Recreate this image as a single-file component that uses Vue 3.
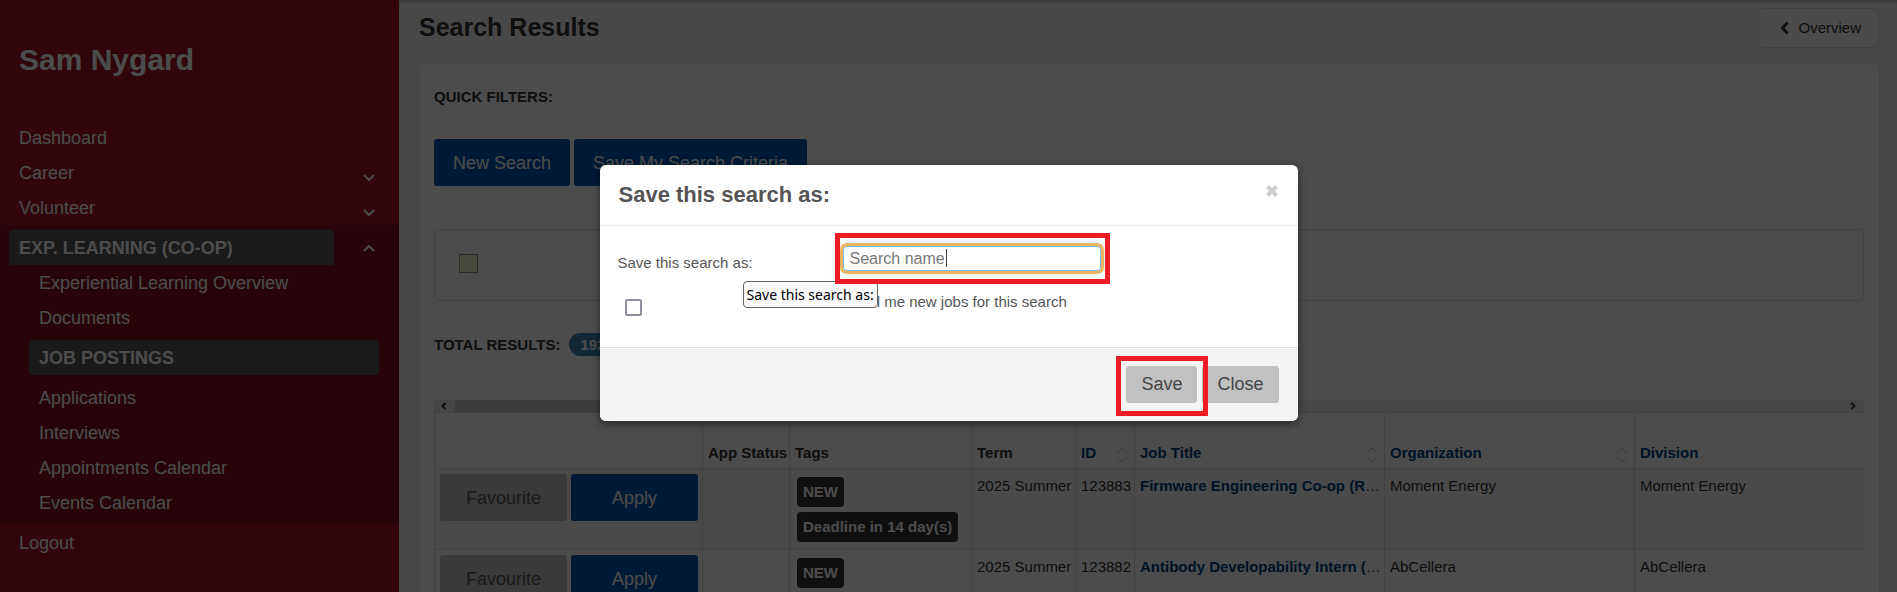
<script setup>
import { ref } from 'vue'

const topItems = [
  { label: 'Dashboard', expandable: false },
  { label: 'Career', expandable: true },
  { label: 'Volunteer', expandable: true },
]
const subItems = [
  { label: 'Experiential Learning Overview' },
  { label: 'Documents' },
  { label: 'JOB POSTINGS', active: true },
  { label: 'Applications' },
  { label: 'Interviews' },
  { label: 'Appointments Calendar' },
  { label: 'Events Calendar' },
]
const columns = [
  { key: 'actions', label: '' },
  { key: 'status', label: 'App Status' },
  { key: 'tags', label: 'Tags' },
  { key: 'term', label: 'Term' },
  { key: 'id', label: 'ID', sortable: true },
  { key: 'title', label: 'Job Title', sortable: true },
  { key: 'org', label: 'Organization', sortable: true },
  { key: 'division', label: 'Division', sortable: true },
]
const jobs = [
  { id: '123883', term: '2025 Summer', tags: ['NEW', 'Deadline in 14 day(s)'], title: 'Firmware Engineering Co-op (R', org: 'Moment Energy', division: 'Moment Energy' },
  { id: '123882', term: '2025 Summer', tags: ['NEW'], title: 'Antibody Developability Intern (', org: 'AbCellera', division: 'AbCellera' },
]
const searchName = ref('Search name')
const notify = ref(false)
</script>

<template>
  <div class="page">
    <aside class="sidebar">
      <h2 class="user">Sam Nygard</h2>
      <nav>
        <a v-for="item in topItems" :key="item.label" href="#" class="nav-row">
          <span>{{ item.label }}</span>
          <svg v-if="item.expandable" class="caret-icon low" viewBox="0 0 12 8" width="12" height="8"><path d="M1 1l5 5 5-5" /></svg>
        </a>
        <div class="group">
          <a href="#" class="group-head">
            <span class="pill head-pill">EXP. LEARNING (CO-OP)</span>
            <svg class="caret-icon" viewBox="0 0 12 8" width="12" height="8"><path d="M1 7l5-5 5 5" /></svg>
          </a>
          <a v-for="item in subItems" :key="item.label" href="#" class="sub-row" :class="{ pill: item.active, active: item.active }">{{ item.label }}</a>
        </div>
        <a href="#" class="nav-row">Logout</a>
      </nav>
    </aside>

    <main class="main">
      <header class="page-head">
        <h1>Search Results</h1>
        <a href="#" class="overview">
          <svg viewBox="0 0 9 14" width="9" height="14"><path d="M7.500 1.500L2.500 7l5 5.500" /></svg>
          Overview
        </a>
      </header>
      <section class="card">
        <h3 class="section-label">QUICK FILTERS:</h3>
        <div class="filters">
          <button type="button" class="btn primary">New Search</button>
          <button type="button" class="btn primary">Save My Search Criteria</button>
        </div>
        <div class="legend"><span class="swatch"></span></div>
        <h3 class="section-label total">TOTAL RESULTS: <span class="badge">192</span></h3>
        <div class="scrollbar">
          <svg class="arrow" viewBox="0 0 6 8" width="6" height="8"><path d="M4.500 1L1.500 4l3 3" /></svg>
          <div class="track"><div class="thumb"></div></div>
          <svg class="arrow" viewBox="0 0 6 8" width="6" height="8"><path d="M1.500 1l3 3-3 3" /></svg>
        </div>
        <div class="table-wrap">
          <table>
            <colgroup>
              <col v-for="c in columns" :key="c.key" :class="'c-' + c.key" />
            </colgroup>
            <thead>
              <tr>
                <th v-for="c in columns" :key="c.key">
                  <div v-if="c.sortable" class="th-sort">
                    <a href="#">{{ c.label }}</a>
                    <svg viewBox="0 0 12 16" width="12" height="16"><path d="M1 6l5-5 5 5M1 10l5 5 5-5" /></svg>
                  </div>
                  <template v-else>{{ c.label }}</template>
                </th>
              </tr>
            </thead>
            <tbody>
              <tr v-for="job in jobs" :key="job.id">
                <td>
                  <div class="actions">
                    <button type="button" class="btn muted">Favourite</button>
                    <button type="button" class="btn primary">Apply</button>
                  </div>
                </td>
                <td></td>
                <td>
                  <div class="tags"><span v-for="t in job.tags" :key="t" class="tag">{{ t }}</span></div>
                </td>
                <td>{{ job.term }}</td>
                <td>{{ job.id }}</td>
                <td><a href="#">{{ job.title }}</a>…</td>
                <td>{{ job.org }}</td>
                <td>{{ job.division }}</td>
              </tr>
            </tbody>
          </table>
        </div>
      </section>
    </main>

    <div class="backdrop">
      <div class="modal" role="dialog" aria-labelledby="modal-title">
        <header class="modal-head">
          <h2 id="modal-title">Save this search as:</h2>
          <button type="button" class="close" aria-label="Close dialog">
            <svg viewBox="0 0 12 12" width="12" height="12"><path d="M1.500 1.500l9 9M10.500 1.500l-9 9" /></svg>
          </button>
        </header>
        <div class="modal-body">
          <label for="search-name" class="name-label">Save this search as:</label>
          <div class="name-field">
            <div class="tooltip">Save this search as:</div>
            <input id="search-name" v-model="searchName" type="text" />
            <span class="text-caret"></span>
            <span class="mark mark-input"></span>
          </div>
          <input id="notify" v-model="notify" type="checkbox" />
          <label for="notify" class="notify-label">Email me new jobs for this search</label>
        </div>
        <footer class="modal-foot">
          <div class="save-wrap">
            <button type="button" class="btn small">Save</button>
            <span class="mark mark-save"></span>
          </div>
          <button type="button" class="btn small">Close</button>
        </footer>
      </div>
    </div>
  </div>
</template>

<style>
body {
  margin: 0;
}
</style>

<style scoped>
* {
  box-sizing: border-box;
}
.page {
  position: relative;
  display: flex;
  height: 100vh;
  overflow: hidden;
  background: #f0f0f0;
  color: #333;
  font: 15px/20px "Liberation Sans", Arial, sans-serif;
}
h1, h2, h3 {
  margin: 0;
}
a {
  color: #00407c;
  text-decoration: none;
}
button {
  font-family: inherit;
}
svg path {
  fill: none;
  stroke: currentColor;
}

/* Sidebar */
.sidebar {
  flex: 0 0 399px;
  background: #a0172b;
  color: #fff;
}
.user {
  padding: 42px 19px 42px;
  font-size: 30px;
  line-height: 36px;
}
.nav-row,
.group-head,
.sub-row {
  display: flex;
  align-items: center;
  justify-content: space-between;
  height: 35px;
  color: #fff;
  font-size: 18px;
  line-height: 35px;
}
.nav-row {
  padding: 2px 24px 0 19px;
}
.caret-icon path {
  stroke-width: 2;
}
.low {
  margin-top: 8px;
}
.group {
  padding: 5px 0;
  background: #84101f;
}
.group-head {
  padding: 0 24px 0 9px;
}
.pill {
  border-radius: 3px;
  background: #575757;
  font-weight: bold;
}
.head-pill {
  width: 325px;
  height: 35px;
  padding-left: 10px;
  line-height: 37px;
}
.sub-row {
  padding: 2px 0 0 39px;
}
.sub-row.active {
  margin: 5px 20px 5px 29px;
  padding-left: 10px;
}

/* Main column */
.main {
  flex: 1;
  min-width: 0;
  padding: 8px 18px 0 20px;
  box-shadow: inset 0 4px 4px -2px #b8b8b8;
}
.page-head {
  display: flex;
  align-items: flex-start;
  justify-content: space-between;
  height: 56px;
}
h1 {
  font-size: 25px;
  line-height: 38px;
}
.overview {
  display: flex;
  align-items: center;
  gap: 9px;
  height: 40px;
  padding: 0 17px 0 21px;
  border: 1px solid #ddd;
  border-radius: 5px;
  background: #fafafa;
  color: #333;
}
.overview path {
  stroke-width: 3;
}
.card {
  padding: 23px 15px 0;
  border-radius: 4px;
  background: #fdfdfd;
  box-shadow: 0 1px 2px rgba(0, 0, 0, 0.15);
}
.section-label {
  font-size: 15px;
  line-height: 20px;
}
.btn {
  height: 47px;
  padding: 2px 19px 0;
  border: 0;
  border-radius: 3px;
  font-size: 18px;
  white-space: nowrap;
}
.primary {
  background: #0058b4;
  color: #fff;
}
.muted {
  background: #c3c3c3;
  color: #555;
}
.filters {
  display: flex;
  gap: 4px;
  margin-top: 32px;
}
.legend {
  height: 72px;
  margin-top: 43px;
  padding: 24px;
  border: 1px solid #ddd;
  border-radius: 5px;
}
.swatch {
  display: block;
  width: 19px;
  height: 19px;
  border: 1px solid #8a8f90;
  background: #f2f4c4;
}
.total {
  display: flex;
  align-items: center;
  gap: 9px;
  margin-top: 32px;
}
.badge {
  height: 23px;
  padding: 0 11px;
  border-radius: 12px;
  background: #3a87ad;
  color: #fff;
  line-height: 23px;
}
.scrollbar {
  display: flex;
  align-items: center;
  height: 12px;
  margin-top: 44px;
  background: #eee;
}
.arrow {
  margin: 0 8px 0 7px;
}
.arrow path {
  stroke-width: 2;
}
.track {
  flex: 1;
  height: 12px;
}
.thumb {
  width: 50%;
  height: 12px;
  background: #c8c8c8;
}
.table-wrap {
  overflow: hidden;
  border-left: 1px solid #ddd;
}
table {
  width: 1450px;
  border-spacing: 0;
  table-layout: fixed;
}
.c-actions { width: 268px; }
.c-status { width: 87px; }
.c-tags { width: 182px; }
.c-term { width: 104px; }
.c-id { width: 59px; }
.c-title,
.c-org,
.c-division { width: 250px; }
th,
td {
  padding: 5px 4px 4px 5px;
  border-top: 1px solid #ddd;
  border-right: 1px solid #ddd;
  text-align: left;
  white-space: nowrap;
}
th {
  height: 56px;
  padding-bottom: 5px;
  vertical-align: bottom;
}
td {
  height: 81px;
  padding-top: 7px;
  vertical-align: top;
}
td:first-child,
td:nth-child(3) {
  padding-top: 5px;
}
tbody tr:nth-child(odd) {
  background: #f8f8f8;
}
td a {
  font-weight: bold;
}
.th-sort {
  display: flex;
  align-items: flex-end;
  justify-content: space-between;
}
.th-sort svg {
  margin-right: 2px;
  color: #bbb;
}
.actions {
  display: grid;
  grid-template-columns: 1fr 1fr;
  gap: 4px;
}
.tags {
  display: flex;
  flex-direction: column;
  align-items: flex-start;
  gap: 5px;
  padding: 3px 2px;
}
.tag {
  height: 30px;
  padding: 0 6px;
  border-radius: 4px;
  background: #333;
  color: #fff;
  font-weight: bold;
  line-height: 30px;
}

/* Dialog */
.backdrop {
  position: absolute;
  inset: 0;
  display: flex;
  align-items: flex-start;
  justify-content: center;
  padding-top: 165px;
  background: rgba(0, 0, 0, 0.7);
}
.modal {
  width: 698px;
  border-radius: 6px;
  background: #fff;
  box-shadow: 0 3px 9px rgba(0, 0, 0, 0.5);
  color: #555;
}
.modal-head {
  display: flex;
  align-items: flex-start;
  justify-content: space-between;
  height: 61px;
  padding: 15px 19px;
  border-bottom: 1px solid #eee;
}
.modal-head h2 {
  font-size: 22px;
  line-height: 30px;
}
.close {
  display: flex;
  padding: 5px 1px;
  border: 0;
  background: none;
  color: #ccc;
}
.close path {
  stroke-width: 4;
}
.modal-body {
  display: grid;
  grid-template-columns: 225px 258px;
  row-gap: 19px;
  padding: 20px 18px 31px;
}
.name-label {
  padding-top: 7px;
}
.name-field {
  position: relative;
  height: 25px;
}
.name-field input {
  display: block;
  width: 100%;
  height: 25px;
  padding: 0 6px;
  border: 1px solid #7ab8e8;
  border-radius: 4px;
  outline: 3px solid #ebb55f;
  background: #fff;
  box-shadow: 0 0 12px rgba(82, 168, 236, 0.5);
  color: #777;
  font: 16px/23px "Liberation Sans", Arial, sans-serif;
}
.text-caret {
  position: absolute;
  top: 3px;
  left: 103px;
  width: 1px;
  height: 18px;
  background: #444;
}
.mark {
  position: absolute;
  border: 5px solid #ed1c24;
  pointer-events: none;
}
.mark-input {
  inset: -13px -9px -13px -8px;
}
.mark-save {
  inset: -10px -11px -13px -10px;
}
.tooltip {
  position: absolute;
  top: 35px;
  left: -100px;
  height: 27px;
  padding: 0 3px;
  border: 1px solid #666;
  border-radius: 4px;
  background: #f9f9fb;
  color: #000;
  font: 14px/25px "Noto Sans", "Open Sans", sans-serif;
  white-space: nowrap;
}
#notify {
  appearance: none;
  width: 17px;
  height: 17px;
  margin: 7px 0 0 7px;
  border: 2px solid #8f8f9d;
  border-radius: 2px;
  background: #fff;
}
.modal-foot {
  display: flex;
  justify-content: flex-end;
  gap: 5px;
  height: 74px;
  padding: 18px 19px;
  border-top: 1px solid #ddd;
  border-radius: 0 0 6px 6px;
  background: #f4f4f4;
  box-shadow: inset 0 1px 0 #fff;
}
.save-wrap {
  position: relative;
  height: 37px;
  z-index: 1;
}
.small {
  height: 37px;
  padding: 0 15px;
  background: #c1c1c1;
  color: #444;
}
</style>
